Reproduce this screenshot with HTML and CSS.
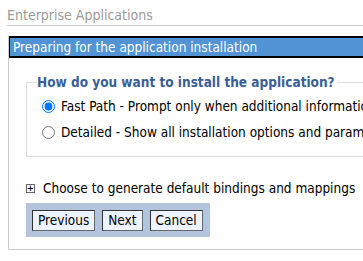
FILE: index.html
```html
<!DOCTYPE html>
<html lang="en">
<head>
    <meta charset="UTF-8">
    <meta name="viewport" content="width=device-width, initial-scale=1.0">
    <title>Enterprise Applications</title>
    <link rel="stylesheet" href="styles.css">
</head>
<body>
    <div class="page-title">Enterprise Applications</div>
    <div class="panel">
        <div class="panel-head">Preparing for the application installation</div>
        <div class="panel-body">
            <fieldset class="choice">
                <legend>How do you want to install the application?</legend>
                <label class="option">
                    <input type="radio" name="path" checked>
                    <span>Fast Path - Prompt only when additional information is required.</span>
                </label>
                <label class="option">
                    <input type="radio" name="path">
                    <span>Detailed - Show all installation options and parameters.</span>
                </label>
            </fieldset>

            <div class="expand">
                <span class="plus">+</span>
                <span>Choose to generate default bindings and mappings</span>
            </div>

            <div class="actions">
                <button>Previous</button>
                <button>Next</button>
                <button>Cancel</button>
            </div>
        </div>
    </div>
</body>
</html>
```

FILE: styles.css
```css
body {
    font-family: "DejaVu Sans Condensed", "DejaVu Sans", sans-serif;
    font-size: 13.5px;
    margin: 0;
    padding: 0;
    background-color: #fff;
    color: #000;
    overflow: hidden;
}
.page-title {
    margin: 7px 0 0 7px;
    padding-bottom: 2px;
    color: #999;
    font-size: 14px;
    border-bottom: 1px solid #ccc;
}
.panel {
    margin: 10px 0 0 8px;
    border-left: 1px solid #ccc;
    border-bottom: 1px solid #ccc;
    padding-bottom: 12px;
    overflow: hidden;
}
.panel-head {
    margin-left: -1px;
    background: #5193d4;
    border: 2px solid #000;
    border-right: none;
    color: #fff;
    padding: 1px 3px 1px;
    white-space: nowrap;
}
.panel-body {
    padding: 16px 0 0 17px;
}
.choice {
    margin: 0;
    padding: 2px 0 16px 10px;
    border: 1px solid #ddd;
    border-right: none;
    white-space: nowrap;
}
.choice legend {
    padding: 0 2px 0 0;
    font-weight: bold;
    color: #3a5e96;
}
.option {
    display: flex;
    align-items: center;
    gap: 6px;
    margin-top: 6px;
}
.option + .option {
    margin-top: 10px;
}
.option input {
    margin: 0 0 0 5px;
    width: 13px;
    height: 13px;
}
.expand {
    display: flex;
    align-items: center;
    gap: 8px;
    margin-top: 23px;
}
.plus {
    display: inline-block;
    width: 7px;
    height: 7px;
    border: 1px solid #666;
    font-size: 9px;
    line-height: 7px;
    text-align: center;
    font-weight: bold;
}
.actions {
    display: inline-flex;
    gap: 7px;
    margin-top: 7px;
    padding: 7px 7px 6px 6px;
    background: #b3c5de;
}
.actions button {
    font-family: inherit;
    font-size: 13.5px;
    padding: 1px 5px 2px;
    background: #eef4ff;
    border: 1px solid #333;
    border-right-color: #666;
    border-bottom-color: #666;
    color: #000;
}
```
